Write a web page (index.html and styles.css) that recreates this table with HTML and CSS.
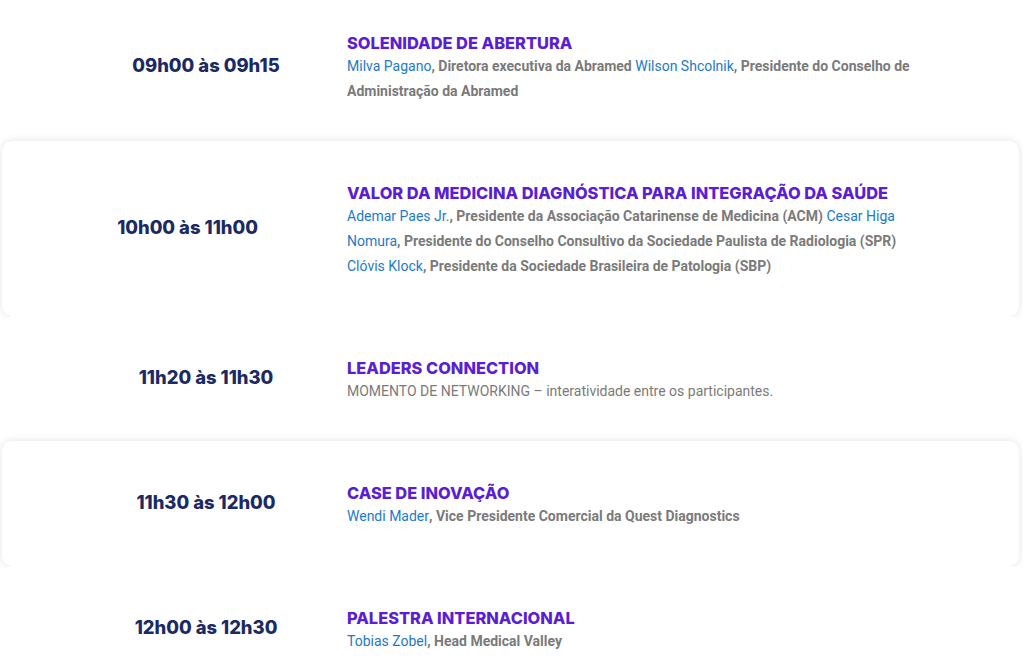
FILE: index.html
```html
<!DOCTYPE html>
<html lang="pt-BR">
<head>
<meta charset="utf-8">
<title>Programação</title>
<link rel="stylesheet" href="styles.css">
</head>
<body>
<div class="schedule">
  <div class="row row--first">
    <div class="time">09h00 às 09h15</div>
    <div class="info">
      <h3 class="title">SOLENIDADE DE ABERTURA</h3>
      <p class="desc"><span class="name">Milva Pagano</span>, Diretora executiva da Abramed <span class="name">Wilson Shcolnik</span>, Presidente do Conselho de Administração da Abramed</p>
    </div>
  </div>
  <div class="row row--card">
    <div class="time time--shift">10h00 às 11h00</div>
    <div class="info">
      <h3 class="title">VALOR DA MEDICINA DIAGNÓSTICA PARA INTEGRAÇÃO DA SAÚDE</h3>
      <p class="desc"><span class="name">Ademar Paes Jr.</span>, Presidente da Associação Catarinense de Medicina (ACM) <span class="name">Cesar Higa Nomura</span>, Presidente do Conselho Consultivo da Sociedade Paulista de Radiologia (SPR) <span class="name">Clóvis Klock</span>, Presidente da Sociedade Brasileira de Patologia (SBP)</p>
    </div>
  </div>
  <div class="row">
    <div class="time">11h20 às 11h30</div>
    <div class="info">
      <h3 class="title">LEADERS CONNECTION</h3>
      <p class="desc desc--plain">MOMENTO DE NETWORKING – interatividade entre os participantes.</p>
    </div>
  </div>
  <div class="row row--card">
    <div class="time">11h30 às 12h00</div>
    <div class="info">
      <h3 class="title">CASE DE INOVAÇÃO</h3>
      <p class="desc"><span class="name">Wendi Mader</span>, Vice Presidente Comercial da Quest Diagnostics</p>
    </div>
  </div>
  <div class="row">
    <div class="time">12h00 às 12h30</div>
    <div class="info">
      <h3 class="title">PALESTRA INTERNACIONAL</h3>
      <p class="desc"><span class="name">Tobias Zobel</span>, Head Medical Valley</p>
    </div>
  </div>
</div>
</body>
</html>
```
FILE: styles.css
```css
* { box-sizing: border-box; }
html, body { margin: 0; padding: 0; background: #fff; }
body { overflow: hidden; height: 663px; }

.schedule {
  width: 1017px;
  margin: -9px 0 0 2px;
  display: flex;
  flex-direction: column;
}

.row {
  display: flex;
  align-items: center;
  padding: 41px 0 37px;
  border-radius: 10px;
  background: #fff;
}

.row--card {
  box-shadow: 0 0 10px rgba(0, 0, 0, 0.11);
}

.time {
  width: 345px;
  padding-left: 63px;
  padding-bottom: 7px;
  flex-shrink: 0;
  text-align: center;
  font-family: "Inter", "Liberation Sans", sans-serif;
  font-weight: 800;
  font-size: 18.4px;
  color: #1b2a63;
}

.time--shift { padding-left: 26px; }

.info {
  width: 580px;
}

.title {
  margin: 0;
  font-family: "Inter", "Liberation Sans", sans-serif;
  font-weight: 800;
  font-size: 16.4px;
  line-height: 22px;
  color: #5a1fd3;
}

.desc {
  margin: 0;
  font-family: "Roboto", "Liberation Sans", sans-serif;
  font-weight: 700;
  font-size: 14px;
  line-height: 25px;
  color: #7a7a7a;
}

.desc--plain { font-weight: 400; }

.name {
  font-weight: 400;
  color: #1d7ac6;
}
```
